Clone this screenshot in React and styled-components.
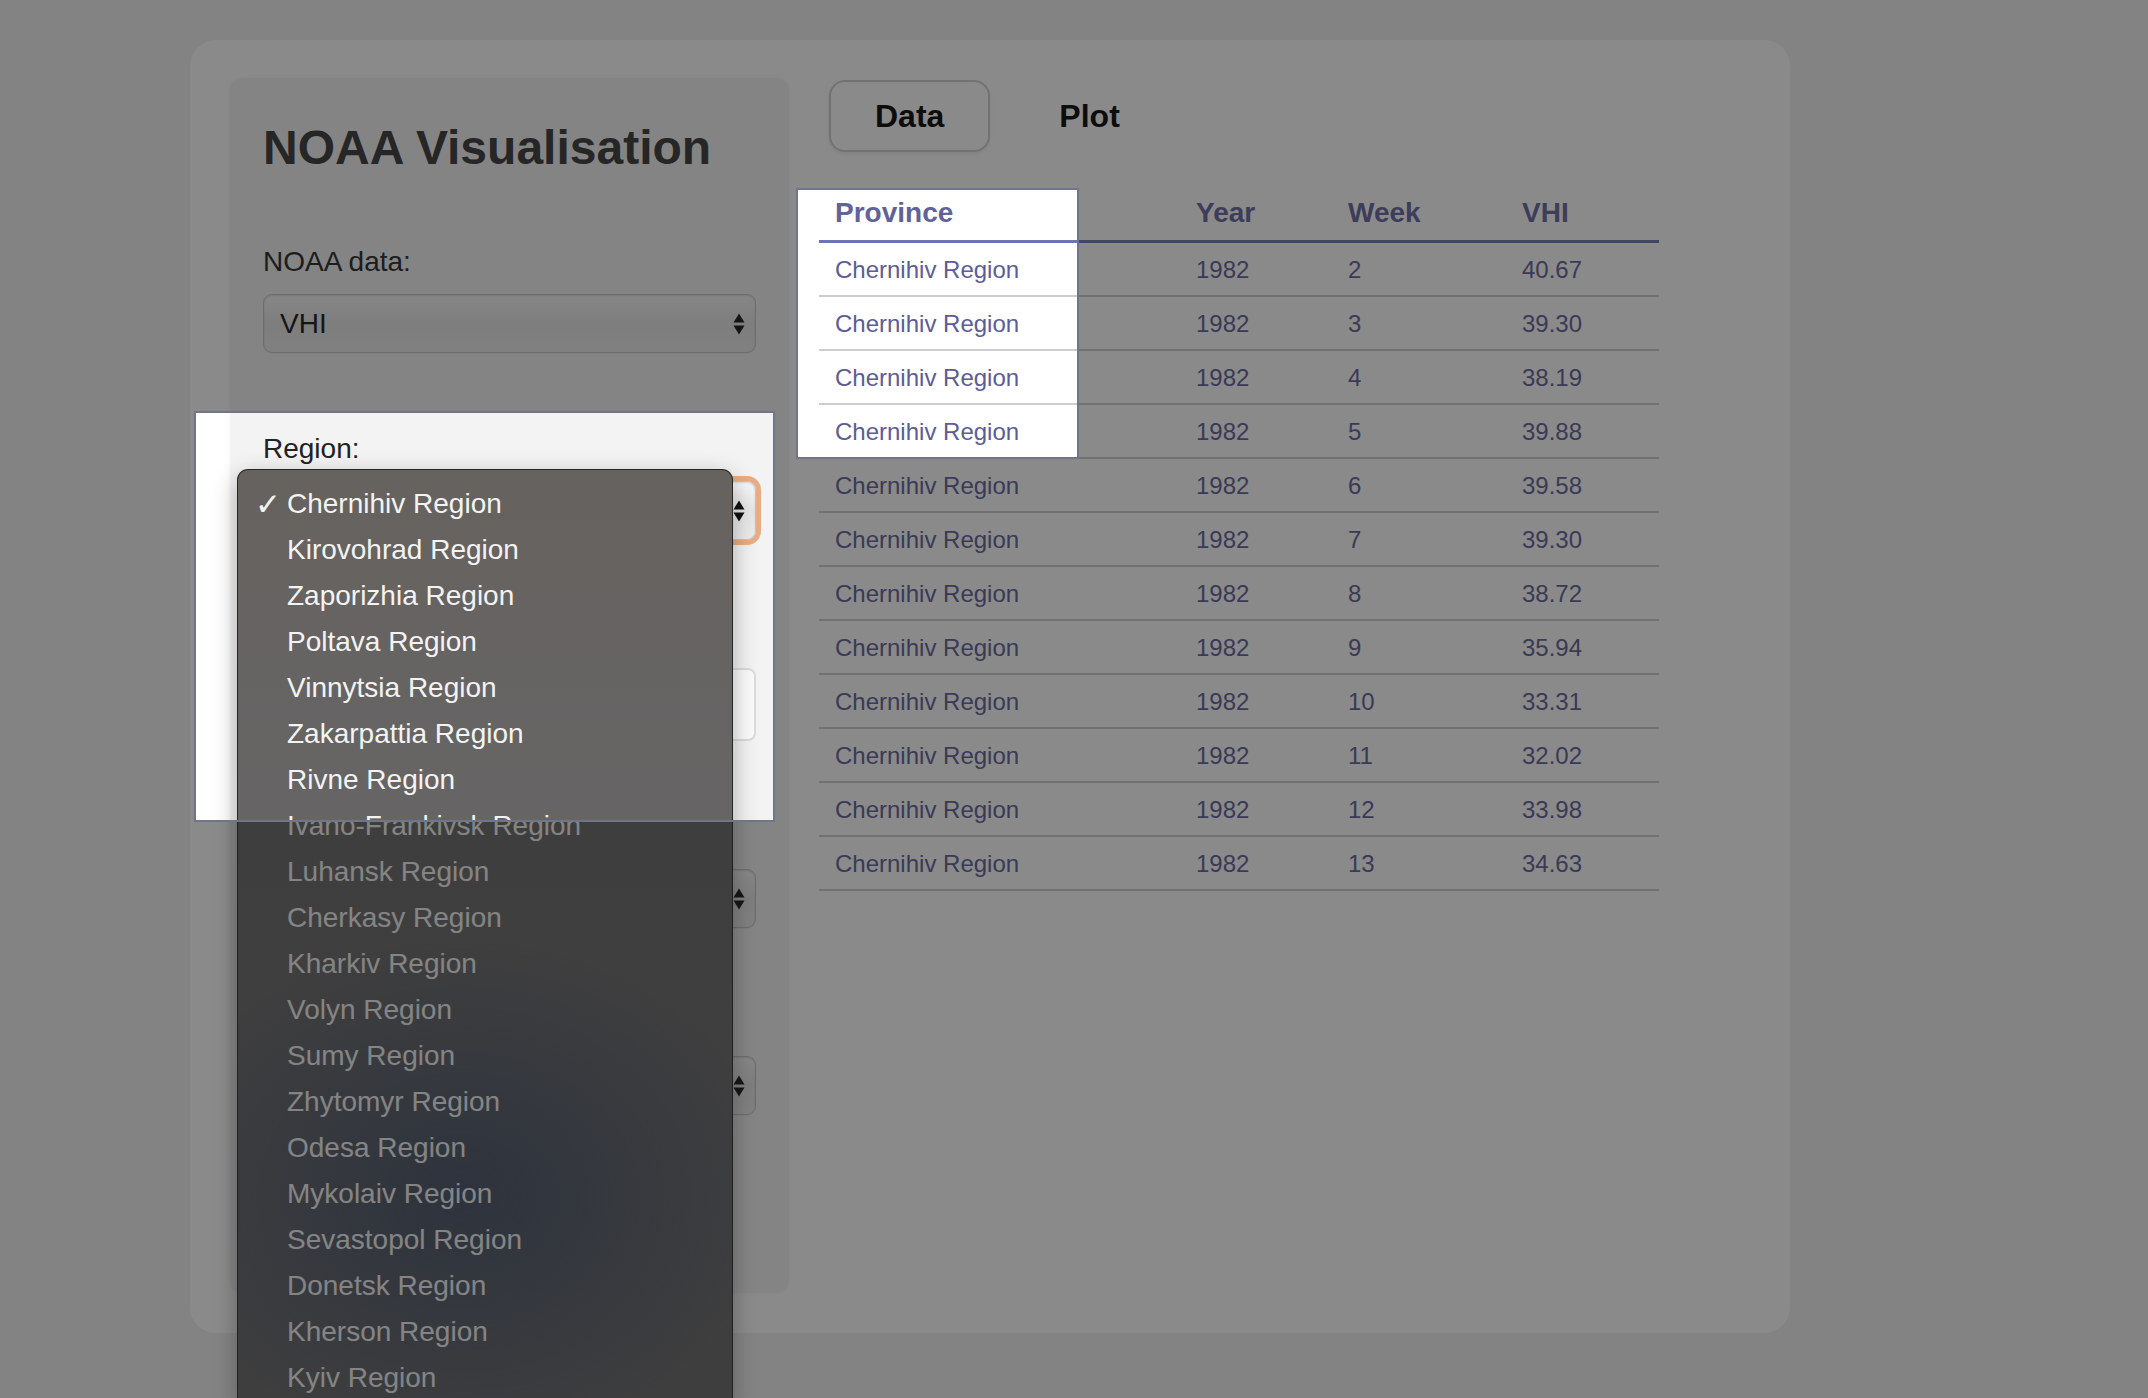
import React from "react";
import styled, { createGlobalStyle } from "styled-components";

const GlobalStyle = createGlobalStyle`
  html, body {
    margin: 0;
    padding: 0;
    overflow: hidden;
    background: #f1f1f1;
    font-family: "Liberation Sans", Arial, Helvetica, sans-serif;
  }
`;

const regions = [
  "Chernihiv Region",
  "Kirovohrad Region",
  "Zaporizhia Region",
  "Poltava Region",
  "Vinnytsia Region",
  "Zakarpattia Region",
  "Rivne Region",
  "Ivano-Frankivsk Region",
  "Luhansk Region",
  "Cherkasy Region",
  "Kharkiv Region",
  "Volyn Region",
  "Sumy Region",
  "Zhytomyr Region",
  "Odesa Region",
  "Mykolaiv Region",
  "Sevastopol Region",
  "Donetsk Region",
  "Kherson Region",
  "Kyiv Region",
];

const rows = [
  [2, "40.67"],
  [3, "39.30"],
  [4, "38.19"],
  [5, "39.88"],
  [6, "39.58"],
  [7, "39.30"],
  [8, "38.72"],
  [9, "35.94"],
  [10, "33.31"],
  [11, "32.02"],
  [12, "33.98"],
  [13, "34.63"],
];

const Page = styled.div`
  height: 1398px;
  box-sizing: border-box;
  padding: 40px 0 0 190px;
`;

const Card = styled.div`
  width: 1600px;
  height: 1293px;
  box-sizing: border-box;
  padding: 38px 40px 40px;
  background: #ffffff;
  border-radius: 26px;
  display: flex;
  gap: 30px;
`;

const Sidebar = styled.aside`
  width: 559px;
  flex-shrink: 0;
  box-sizing: border-box;
  padding: 42px 33px 40px;
  background: #f3f3f3;
  border-radius: 12px;
  box-shadow: 0 0 6px rgba(0, 0, 0, 0.04);
  display: flex;
  flex-direction: column;
  gap: 80px;
`;

const Title = styled.h1`
  margin: 0 0 -9px;
  font-size: 48px;
  line-height: 55px;
  font-weight: 700;
  color: #333;
`;

const Field = styled.div`
  display: flex;
  flex-direction: column;
  gap: 16px;
`;

const Label = styled.label`
  height: 32px;
  font-size: 28px;
  line-height: 32px;
  color: #222;
`;

const Control = styled.div`
  position: relative;
`;

const SelectBox = styled.div`
  height: 59px;
  box-sizing: border-box;
  display: flex;
  align-items: center;
  justify-content: space-between;
  padding: 0 10px 0 16px;
  font-size: 28px;
  color: #111;
  background: linear-gradient(#f8f8f8, #e6e6e6 50%, #ececec);
  border: 1px solid #c4c4c4;
  border-radius: 9px;
  box-shadow: inset 0 1px 2px rgba(0, 0, 0, 0.12),
    ${(p) => (p.$focused ? "0 0 0 5px #e9ad86" : "0 1px 1px rgba(0,0,0,0.05)")};
`;

const TextInput = styled.div`
  height: 73px;
  box-sizing: border-box;
  background: #fbfbfb;
  border: 2px solid #dcdcdc;
  border-radius: 8px;
`;

const Menu = styled.ul`
  position: absolute;
  top: -12px;
  left: -26px;
  width: 496px;
  margin: 0;
  padding: 11px 0 0;
  list-style: none;
  box-sizing: border-box;
  z-index: 10;
  border: 1px solid rgba(20, 20, 20, 0.75);
  border-radius: 11px 11px 0 0;
  background: radial-gradient(
      ellipse 320px 260px at 45% 78%,
      rgba(38, 58, 96, 0.55),
      rgba(38, 58, 96, 0) 100%
    ),
    linear-gradient(#66625e, #666463 20%, #666 60%, #656565);
  box-shadow: 0 8px 24px rgba(0, 0, 0, 0.3);
`;

const MenuItem = styled.li`
  height: 46px;
  display: flex;
  align-items: center;
  padding-left: 17px;
  font-size: 28px;
  color: #f3f3f3;
  white-space: nowrap;
`;

const Check = styled.span`
  width: 32px;
  flex-shrink: 0;
  font-family: "DejaVu Sans", sans-serif;
  font-size: 31px;
  line-height: 1;
`;

const Main = styled.main`
  flex: 1;
  padding-top: 2px;
  display: flex;
  flex-direction: column;
  gap: 37px;
`;

const Tabs = styled.nav`
  display: flex;
  gap: 23px;
  margin-left: 10px;
`;

const Tab = styled.button`
  height: 72px;
  padding: 0 44px;
  font-family: inherit;
  font-size: 32px;
  font-weight: 700;
  color: #000;
  background: ${(p) => (p.$active ? "#fff" : "transparent")};
  border: 2px solid ${(p) => (p.$active ? "#cfcfcf" : "transparent")};
  border-radius: 16px;
  box-shadow: ${(p) => (p.$active ? "0 2px 4px rgba(0,0,0,0.08)" : "none")};
`;

const Table = styled.table`
  width: 840px;
  table-layout: fixed;
  border-collapse: separate;
  border-spacing: 0;
`;

const Th = styled.th`
  padding: 8px 16px 11px;
  text-align: left;
  font-size: 28px;
  line-height: 32px;
  font-weight: 700;
  color: #62629b;
  border-bottom: 3px solid #6a76ad;
`;

const Td = styled.td`
  height: 54px;
  padding: 2px 16px 0;
  box-sizing: border-box;
  font-size: 24px;
  color: #5c5c96;
  border-bottom: 2px solid #cdcdcd;
`;

const Dim = styled.div`
  position: fixed;
  inset: 0;
  z-index: 50;
  pointer-events: none;
  background: rgba(25, 25, 25, 0.51);
  clip-path: path(
    evenodd,
    "M0 0H2148V1398H0Z M195 412H774V821H195Z M797 189H1078V458H797Z"
  );
`;

const HoleFrame = styled.div`
  position: fixed;
  z-index: 51;
  pointer-events: none;
  left: ${(p) => p.$x - 1}px;
  top: ${(p) => p.$y - 1}px;
  width: ${(p) => p.$w}px;
  height: ${(p) => p.$h}px;
  border: 2px solid #71758a;
  box-sizing: border-box;
`;

const Arrows = () => (
  <svg width="12" height="24" viewBox="0 0 12 24">
    <path d="M0.5 10.5 L6 1.5 L11.5 10.5 Z" fill="#111" />
    <path d="M0.5 13.5 L11.5 13.5 L6 22.5 Z" fill="#111" />
  </svg>
);

const Select = ({ value, focused }) => (
  <SelectBox $focused={focused}>
    <span>{value}</span>
    <Arrows />
  </SelectBox>
);

export default function App() {
  return (
    <>
      <GlobalStyle />
      <Page>
        <Card>
          <Sidebar>
            <Title>NOAA Visualisation</Title>
            <Field>
              <Label>NOAA data:</Label>
              <Select value="VHI" />
            </Field>
            <Field>
              <Label>Region:</Label>
              <Control>
                <Select focused />
                <Menu>
                  {regions.map((r, i) => (
                    <MenuItem key={r}>
                      <Check>{i === 0 ? "\u2713" : ""}</Check>
                      {r}
                    </MenuItem>
                  ))}
                </Menu>
              </Control>
            </Field>
            <Field>
              <Label />
              <TextInput />
            </Field>
            <Field>
              <Label />
              <Select />
            </Field>
            <Field>
              <Label />
              <Select />
            </Field>
          </Sidebar>
          <Main>
            <Tabs>
              <Tab $active>Data</Tab>
              <Tab>Plot</Tab>
            </Tabs>
            <Table>
              <colgroup>
                <col style={{ width: 361 }} />
                <col style={{ width: 152 }} />
                <col style={{ width: 174 }} />
                <col style={{ width: 153 }} />
              </colgroup>
              <thead>
                <tr>
                  <Th>Province</Th>
                  <Th>Year</Th>
                  <Th>Week</Th>
                  <Th>VHI</Th>
                </tr>
              </thead>
              <tbody>
                {rows.map(([week, vhi]) => (
                  <tr key={week}>
                    <Td>Chernihiv Region</Td>
                    <Td>1982</Td>
                    <Td>{week}</Td>
                    <Td>{vhi}</Td>
                  </tr>
                ))}
              </tbody>
            </Table>
          </Main>
        </Card>
      </Page>
      <Dim />
      <HoleFrame $x={195} $y={412} $w={581} $h={411} />
      <HoleFrame $x={797} $y={189} $w={283} $h={271} />
    </>
  );
}
